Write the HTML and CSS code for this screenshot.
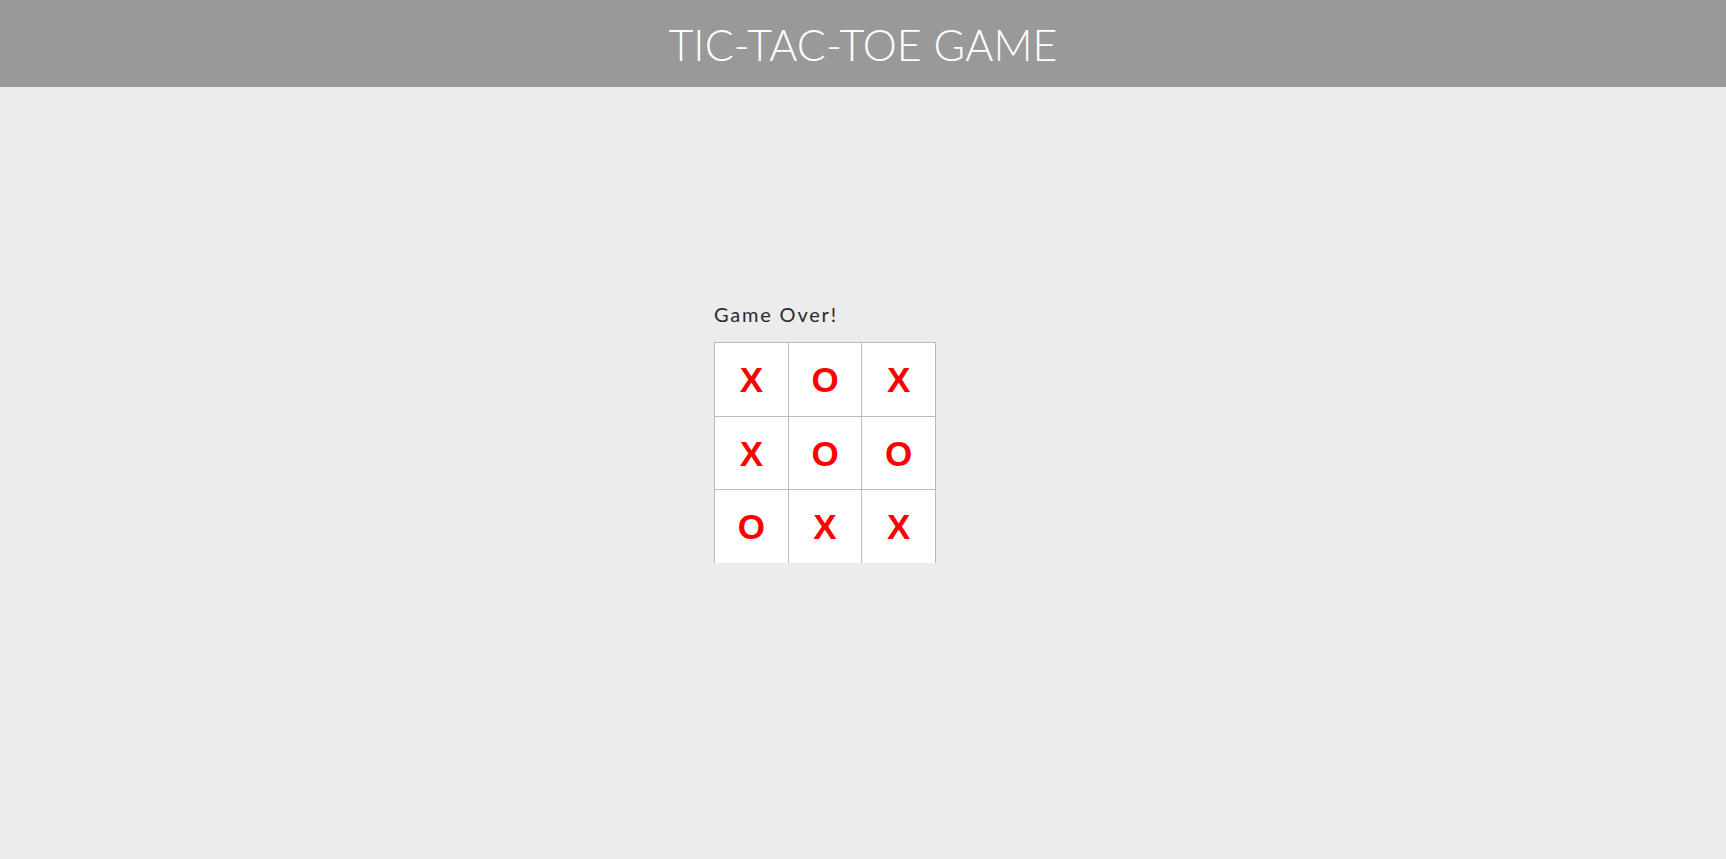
FILE: index.html
```html
<!DOCTYPE html>
<html lang="en">
<head>
<meta charset="utf-8">
<title>Tic-Tac-Toe</title>
<link rel="stylesheet" href="styles.css">
</head>
<body>
<header class="topbar">
  <h1 class="title">TIC-TAC-TOE GAME</h1>
</header>
<main class="main">
  <section class="game">
    <p class="status">Game Over!</p>
    <div class="board">
      <div class="cell">X</div>
      <div class="cell">O</div>
      <div class="cell">X</div>
      <div class="cell">X</div>
      <div class="cell">O</div>
      <div class="cell">O</div>
      <div class="cell">O</div>
      <div class="cell">X</div>
      <div class="cell">X</div>
    </div>
  </section>
</main>
</body>
</html>
```

FILE: styles.css
```css
html, body {
  margin: 0;
  padding: 0;
}

body {
  background: #ececec;
  font-family: "Lato", "Liberation Sans", sans-serif;
  min-height: 100vh;
}

.topbar {
  height: 87px;
  background: #999999;
  display: flex;
  align-items: center;
  justify-content: center;
}

.title {
  margin: 0;
  color: #ffffff;
  font-size: 43px;
  font-weight: 300;
  letter-spacing: 0.1px;
  line-height: 1;
  padding-top: 1px;
}

.main {
  display: flex;
  justify-content: center;
  padding-top: 215px;
}

.game {
  width: 298px;
}

.status {
  margin: 0 0 16px 0;
  font-size: 20px;
  line-height: 24px;
  font-weight: 400;
  color: #2a2a2a;
  letter-spacing: 1.8px;
}

.board {
  width: 222px;
  height: 221px;
  overflow: hidden;
  box-sizing: border-box;
  border-left: 1px solid #bbbbbb;
  border-top: 1px solid #bbbbbb;
  display: grid;
  grid-template-columns: repeat(3, 1fr);
  grid-auto-rows: 73.5px;
  background: #ffffff;
}

.cell {
  box-sizing: border-box;
  border-right: 1px solid #bbbbbb;
  border-bottom: 1px solid #bbbbbb;
  display: flex;
  align-items: center;
  justify-content: center;
  padding-top: 2px;
  color: #ff0000;
  font-family: "Liberation Sans", Arial, sans-serif;
  font-weight: 700;
  font-size: 35px;
}
```
